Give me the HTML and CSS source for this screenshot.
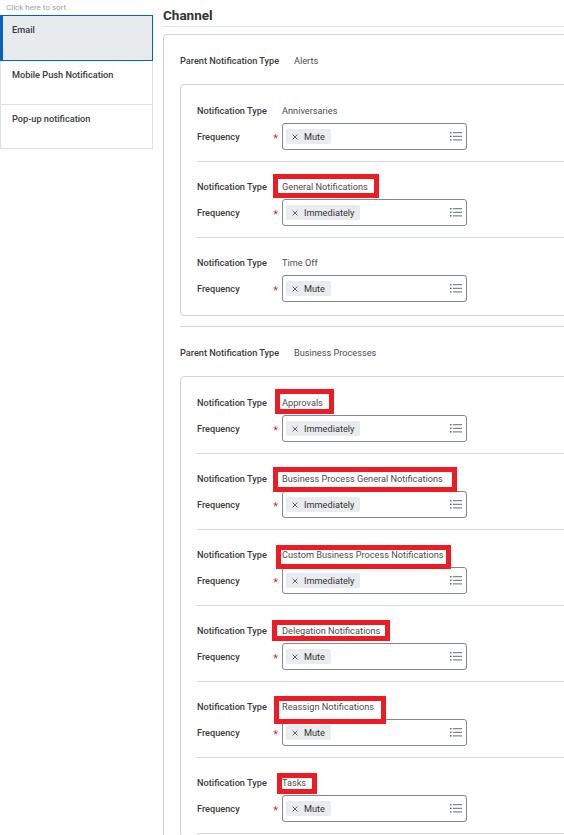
FILE: index.html
```html
<!DOCTYPE html>
<html lang="en">
<head>
<meta charset="utf-8">
<title>Channel notifications</title>
<link rel="stylesheet" href="styles.css">
</head>
<body>
<div class="page">
  <aside class="sidebar">
    <div class="sort-hint">Click here to sort</div>
    <div class="tab tab--active">Email</div>
    <div class="tab">Mobile Push Notification</div>
    <div class="tab">Pop-up notification</div>
  </aside>

  <main class="main">
    <h2 class="channel-title">Channel</h2>
    <div class="outer-card">

      <section class="group">
        <div class="parent-row"><span class="label">Parent Notification Type</span><span class="value">Alerts</span></div>
        <div class="inner-card">
          <div class="row">
            <div class="type-line"><span class="label">Notification Type</span><span class="value"><span class="mark">Anniversaries</span></span></div>
            <div class="freq-line">
              <div class="freq-label"><span class="label">Frequency</span><span class="req">*</span></div>
              <div class="select"><span class="chip"><svg class="chip-x" viewBox="0 0 6 6"><path d="M0.6 0.6L5.4 5.4M5.4 0.6L0.6 5.4" stroke="#5b6670" stroke-width="1"/></svg>Mute</span><svg class="list-icon" viewBox="0 0 12 9"><g fill="#5f6b76"><rect x="0" y="0" width="1.6" height="1.4"/><rect x="0" y="3.6" width="1.6" height="1.4"/><rect x="0" y="7.2" width="1.6" height="1.4"/><rect x="3" y="0.2" width="9" height="1"/><rect x="3" y="3.8" width="9" height="1"/><rect x="3" y="7.4" width="9" height="1"/></g></svg></div>
            </div>
          </div>
          <div class="row">
            <div class="type-line"><span class="label">Notification Type</span><span class="value"><span class="mark mark--general">General Notifications</span></span></div>
            <div class="freq-line">
              <div class="freq-label"><span class="label">Frequency</span><span class="req">*</span></div>
              <div class="select"><span class="chip"><svg class="chip-x" viewBox="0 0 6 6"><path d="M0.6 0.6L5.4 5.4M5.4 0.6L0.6 5.4" stroke="#5b6670" stroke-width="1"/></svg>Immediately</span><svg class="list-icon" viewBox="0 0 12 9"><g fill="#5f6b76"><rect x="0" y="0" width="1.6" height="1.4"/><rect x="0" y="3.6" width="1.6" height="1.4"/><rect x="0" y="7.2" width="1.6" height="1.4"/><rect x="3" y="0.2" width="9" height="1"/><rect x="3" y="3.8" width="9" height="1"/><rect x="3" y="7.4" width="9" height="1"/></g></svg></div>
            </div>
          </div>
          <div class="row row--last">
            <div class="type-line"><span class="label">Notification Type</span><span class="value"><span class="mark">Time Off</span></span></div>
            <div class="freq-line">
              <div class="freq-label"><span class="label">Frequency</span><span class="req">*</span></div>
              <div class="select"><span class="chip"><svg class="chip-x" viewBox="0 0 6 6"><path d="M0.6 0.6L5.4 5.4M5.4 0.6L0.6 5.4" stroke="#5b6670" stroke-width="1"/></svg>Mute</span><svg class="list-icon" viewBox="0 0 12 9"><g fill="#5f6b76"><rect x="0" y="0" width="1.6" height="1.4"/><rect x="0" y="3.6" width="1.6" height="1.4"/><rect x="0" y="7.2" width="1.6" height="1.4"/><rect x="3" y="0.2" width="9" height="1"/><rect x="3" y="3.8" width="9" height="1"/><rect x="3" y="7.4" width="9" height="1"/></g></svg></div>
            </div>
          </div>
        </div>
      </section>

      <section class="group group--open">
        <div class="parent-row"><span class="label">Parent Notification Type</span><span class="value">Business Processes</span></div>
        <div class="inner-card">
          <div class="row">
            <div class="type-line"><span class="label">Notification Type</span><span class="value"><span class="mark mark--approvals">Approvals</span></span></div>
            <div class="freq-line">
              <div class="freq-label"><span class="label">Frequency</span><span class="req">*</span></div>
              <div class="select"><span class="chip"><svg class="chip-x" viewBox="0 0 6 6"><path d="M0.6 0.6L5.4 5.4M5.4 0.6L0.6 5.4" stroke="#5b6670" stroke-width="1"/></svg>Immediately</span><svg class="list-icon" viewBox="0 0 12 9"><g fill="#5f6b76"><rect x="0" y="0" width="1.6" height="1.4"/><rect x="0" y="3.6" width="1.6" height="1.4"/><rect x="0" y="7.2" width="1.6" height="1.4"/><rect x="3" y="0.2" width="9" height="1"/><rect x="3" y="3.8" width="9" height="1"/><rect x="3" y="7.4" width="9" height="1"/></g></svg></div>
            </div>
          </div>
          <div class="row">
            <div class="type-line"><span class="label">Notification Type</span><span class="value"><span class="mark mark--bpgn">Business Process General Notifications</span></span></div>
            <div class="freq-line">
              <div class="freq-label"><span class="label">Frequency</span><span class="req">*</span></div>
              <div class="select"><span class="chip"><svg class="chip-x" viewBox="0 0 6 6"><path d="M0.6 0.6L5.4 5.4M5.4 0.6L0.6 5.4" stroke="#5b6670" stroke-width="1"/></svg>Immediately</span><svg class="list-icon" viewBox="0 0 12 9"><g fill="#5f6b76"><rect x="0" y="0" width="1.6" height="1.4"/><rect x="0" y="3.6" width="1.6" height="1.4"/><rect x="0" y="7.2" width="1.6" height="1.4"/><rect x="3" y="0.2" width="9" height="1"/><rect x="3" y="3.8" width="9" height="1"/><rect x="3" y="7.4" width="9" height="1"/></g></svg></div>
            </div>
          </div>
          <div class="row">
            <div class="type-line"><span class="label">Notification Type</span><span class="value"><span class="mark mark--custom">Custom Business Process Notifications</span></span></div>
            <div class="freq-line">
              <div class="freq-label"><span class="label">Frequency</span><span class="req">*</span></div>
              <div class="select"><span class="chip"><svg class="chip-x" viewBox="0 0 6 6"><path d="M0.6 0.6L5.4 5.4M5.4 0.6L0.6 5.4" stroke="#5b6670" stroke-width="1"/></svg>Immediately</span><svg class="list-icon" viewBox="0 0 12 9"><g fill="#5f6b76"><rect x="0" y="0" width="1.6" height="1.4"/><rect x="0" y="3.6" width="1.6" height="1.4"/><rect x="0" y="7.2" width="1.6" height="1.4"/><rect x="3" y="0.2" width="9" height="1"/><rect x="3" y="3.8" width="9" height="1"/><rect x="3" y="7.4" width="9" height="1"/></g></svg></div>
            </div>
          </div>
          <div class="row">
            <div class="type-line"><span class="label">Notification Type</span><span class="value"><span class="mark mark--delegation">Delegation Notifications</span></span></div>
            <div class="freq-line">
              <div class="freq-label"><span class="label">Frequency</span><span class="req">*</span></div>
              <div class="select"><span class="chip"><svg class="chip-x" viewBox="0 0 6 6"><path d="M0.6 0.6L5.4 5.4M5.4 0.6L0.6 5.4" stroke="#5b6670" stroke-width="1"/></svg>Mute</span><svg class="list-icon" viewBox="0 0 12 9"><g fill="#5f6b76"><rect x="0" y="0" width="1.6" height="1.4"/><rect x="0" y="3.6" width="1.6" height="1.4"/><rect x="0" y="7.2" width="1.6" height="1.4"/><rect x="3" y="0.2" width="9" height="1"/><rect x="3" y="3.8" width="9" height="1"/><rect x="3" y="7.4" width="9" height="1"/></g></svg></div>
            </div>
          </div>
          <div class="row">
            <div class="type-line"><span class="label">Notification Type</span><span class="value"><span class="mark mark--reassign">Reassign Notifications</span></span></div>
            <div class="freq-line">
              <div class="freq-label"><span class="label">Frequency</span><span class="req">*</span></div>
              <div class="select"><span class="chip"><svg class="chip-x" viewBox="0 0 6 6"><path d="M0.6 0.6L5.4 5.4M5.4 0.6L0.6 5.4" stroke="#5b6670" stroke-width="1"/></svg>Mute</span><svg class="list-icon" viewBox="0 0 12 9"><g fill="#5f6b76"><rect x="0" y="0" width="1.6" height="1.4"/><rect x="0" y="3.6" width="1.6" height="1.4"/><rect x="0" y="7.2" width="1.6" height="1.4"/><rect x="3" y="0.2" width="9" height="1"/><rect x="3" y="3.8" width="9" height="1"/><rect x="3" y="7.4" width="9" height="1"/></g></svg></div>
            </div>
          </div>
          <div class="row">
            <div class="type-line"><span class="label">Notification Type</span><span class="value"><span class="mark mark--tasks">Tasks</span></span></div>
            <div class="freq-line">
              <div class="freq-label"><span class="label">Frequency</span><span class="req">*</span></div>
              <div class="select"><span class="chip"><svg class="chip-x" viewBox="0 0 6 6"><path d="M0.6 0.6L5.4 5.4M5.4 0.6L0.6 5.4" stroke="#5b6670" stroke-width="1"/></svg>Mute</span><svg class="list-icon" viewBox="0 0 12 9"><g fill="#5f6b76"><rect x="0" y="0" width="1.6" height="1.4"/><rect x="0" y="3.6" width="1.6" height="1.4"/><rect x="0" y="7.2" width="1.6" height="1.4"/><rect x="3" y="0.2" width="9" height="1"/><rect x="3" y="3.8" width="9" height="1"/><rect x="3" y="7.4" width="9" height="1"/></g></svg></div>
            </div>
          </div>
        </div>
      </section>

    </div>
  </main>
</div>
</body>
</html>
```

FILE: styles.css
```css
*, *::before, *::after { box-sizing: border-box; }

html, body {
  margin: 0;
  padding: 0;
  background: #fff;
}

body {
  font-family: Roboto, "Liberation Sans", Arial, sans-serif;
  font-size: 9.2px;
  color: #333;
}

.page {
  width: 564px;
  height: 835px;
  overflow: hidden;
  display: flex;
  align-items: flex-start;
}

/* ---------- sidebar ---------- */
.sidebar {
  flex: 0 0 153px;
  width: 153px;
}

.sort-hint {
  height: 15px;
  line-height: 15px;
  padding-left: 6px;
  font-size: 8px;
  color: #9aa2aa;
}

.tab {
  height: 44px;
  padding: 7px 11px 0;
  border: 1px solid #dde1e5;
  border-top: none;
  line-height: 14px;
  font-weight: 500;
  color: #3a3a3a;
}

.tab--active {
  height: 46px;
  border: 1px solid #0b5fbf;
  border-left-width: 3px;
  padding-left: 9px;
  background: #e8ebee;
}

/* ---------- main ---------- */
.main {
  flex: 0 0 600px;
  width: 600px;
  margin-left: 10px;
}

.channel-title {
  margin: 0;
  padding: 6px 0 2px;
  line-height: 18px;
  font-size: 13.5px;
  font-weight: 700;
  color: #333;
  border-bottom: 1px solid #e4e7ea;
}

.outer-card {
  margin-top: 7px;
  border: 1px solid #cfd4d9;
  border-radius: 4px;
  padding-left: 16px;
  min-height: 900px;
}

.group {
  padding: 16px 0 10px;
  border-bottom: 1px solid #cfd4d9;
}

.group--open {
  border-bottom: none;
}

.parent-row {
  display: grid;
  grid-template-columns: 114px auto;
  line-height: 19px;
  margin-bottom: 14px;
}

.label {
  font-weight: 500;
  color: #3a3a3a;
}

.value {
  color: #4d4d4d;
}

.inner-card {
  border: 1px solid #cfd4d9;
  border-radius: 4px;
  padding: 1px 0 2px;
}

.row {
  margin-left: 16px;
  padding: 16px 0 11px;
  border-bottom: 1px solid #d3d7dc;
}

.row--last {
  border-bottom: none;
}

.type-line {
  display: grid;
  grid-template-columns: 85px auto;
  line-height: 18px;
}

.freq-line {
  display: grid;
  grid-template-columns: 85px 185px;
  align-items: center;
  margin-top: 3px;
}

.freq-label {
  display: flex;
  justify-content: space-between;
  align-items: center;
  padding-right: 4px;
}

.req {
  color: #de2a2a;
  font-size: 11px;
  font-weight: 400;
  line-height: 11px;
  margin-top: 3px;
}

.select {
  height: 27px;
  border: 1px solid #7f8a94;
  border-radius: 3px;
  padding: 0 4px 0 3px;
  display: flex;
  align-items: center;
  justify-content: space-between;
  background: #fff;
}

.chip {
  display: flex;
  align-items: center;
  gap: 6px;
  height: 15px;
  padding: 0 6px;
  background: #e9ebee;
  border-radius: 2px;
  line-height: 15px;
  color: #333;
}

.chip-x {
  display: block;
  width: 6px;
  height: 6px;
}

.list-icon {
  display: block;
  width: 12px;
  height: 9px;
}

/* ---------- red annotation boxes ---------- */
.mark {
  position: relative;
  display: inline-block;
}

.mark--general::after,
.mark--approvals::after,
.mark--bpgn::after,
.mark--custom::after,
.mark--delegation::after,
.mark--reassign::after,
.mark--tasks::after {
  content: "";
  position: absolute;
  border: 5px solid #ed1c24;
  pointer-events: none;
}

.mark--general::after    { left: -9px;  top: -4px; width: 106px; height: 24px; }
.mark--approvals::after  { left: -7px;  top: -5px; width: 59px;  height: 25px; }
.mark--bpgn::after       { left: -9px;  top: -3px; width: 184px; height: 25px; }
.mark--custom::after     { left: -6px;  top: -1px; width: 175px; height: 24px; }
.mark--delegation::after { left: -10px; top: -2px; width: 118px; height: 21px; }
.mark--reassign::after   { left: -8px;  top: -2px; width: 112px; height: 28px; }
.mark--tasks::after      { left: -5px;  top: -1px; width: 40px;  height: 21px; }
```
